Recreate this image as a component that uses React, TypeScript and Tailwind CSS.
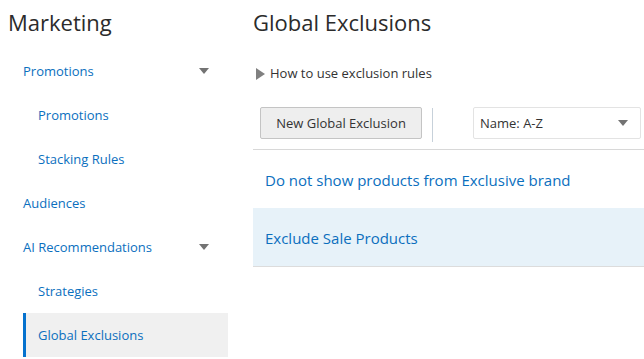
const font = { fontFamily: '"Open Sans", "Noto Sans", sans-serif' };

function Caret({ className = "" }: { className?: string }) {
  return (
    <svg width="10" height="6" viewBox="0 0 10 6" className={className}>
      <path d="M0 0 L10 0 L5 6 Z" fill="#737373" />
    </svg>
  );
}

const nav = [
  { label: "Promotions", level: 0, caret: true },
  { label: "Promotions", level: 1 },
  { label: "Stacking Rules", level: 1 },
  { label: "Audiences", level: 0 },
  { label: "AI Recommendations", level: 0, caret: true },
  { label: "Strategies", level: 1 },
  { label: "Global Exclusions", level: 1, active: true },
];

const rows = [
  { label: "Do not show products from Exclusive brand" },
  { label: "Exclude Sale Products", selected: true },
];

export default function App() {
  return (
    <div className="flex w-[644px] h-[359px] bg-white overflow-hidden text-[#333]" style={font}>
      {/* sidebar */}
      <div className="w-[253px] shrink-0 flex flex-col">
        <h1 className="pl-2 pt-[7px] h-[49px] text-[22px] leading-[30px] text-[#2b2b2b]">Marketing</h1>
        <ul className="flex flex-col pl-[23px] pr-[25px]">
          {nav.map((n, i) => (
            <li
              key={i}
              className={`h-11 pt-[2px] flex items-center justify-between text-[13px] text-[#0b6fbe] ${
                n.active
                  ? "bg-[#f0f0f0] border-l-[3px] border-[#0572ce] pl-[12px]"
                  : n.level === 1
                  ? "pl-[15px]"
                  : ""
              }`}
            >
              <span>{n.label}</span>
              {n.caret && <Caret className="mr-[19px] -mt-[2px]" />}
            </li>
          ))}
        </ul>
      </div>

      {/* main */}
      <div className="flex-1 flex flex-col">
        <h2 className="pt-[7px] h-[56px] text-[22px] leading-[30px] text-[#2b2b2b]">Global Exclusions</h2>
        <div className="flex items-center gap-[5px] pl-[3px] pt-[2px] h-[34px] text-[13px] text-[#333]">
          <svg width="9" height="12" viewBox="0 0 9 12" className="-mt-[1px]">
            <path d="M0 0 L9 6 L0 12 Z" fill="#808080" />
          </svg>
          <span>How to use exclusion rules</span>
        </div>
        <div className="flex items-center pl-[7px] mt-[16px] h-[34px]">
          <button className="h-8 w-[162px] pt-[2px] rounded-[2px] border border-[#c4c4c4] bg-[#eeeeee] text-[13px] text-[#333]">
            New Global Exclusion
          </button>
          <div className="w-px h-[34px] bg-[#c7d1da] ml-[10px] mt-[4px]" />
          <div className="ml-[40px] h-8 w-[168px] pt-[2px] rounded-[2px] border border-[#e3e3e3] flex items-center justify-between pl-[6px] pr-[12px] text-[13px] text-[#333]">
            <span>Name: A-Z</span>
            <Caret className="-mt-[2px]" />
          </div>
        </div>
        <div className="mt-[9px] border-t border-[#d8d8d8]">
          {rows.map((r, i) => (
            <div
              key={i}
              className={`flex items-center pl-3 pt-[3px] text-[15px] text-[#0b6fbe] ${
                r.selected ? "h-[59px] bg-[#e7f2f9] border-b border-[#dcdcdc]" : "h-[58px]"
              }`}
            >
              {r.label}
            </div>
          ))}
        </div>
      </div>
    </div>
  );
}
